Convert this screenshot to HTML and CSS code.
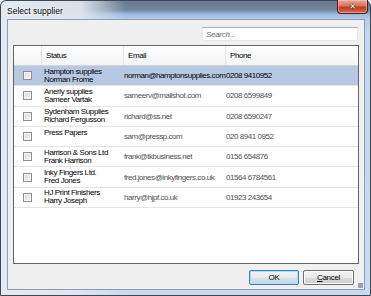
FILE: index.html
```html
<!DOCTYPE html>
<html lang="en">
<head>
  <meta charset="UTF-8" />
  <title>Select supplier</title>
  <link rel="stylesheet" href="styles.css">
</head>
<body>
  <div class="window">
    <div class="titlebar">
      <span class="title">Select supplier</span>
      <div class="close">&#x2715;</div>
    </div>

    <div class="client">
      <div class="search-row">
        <input class="search" type="text" placeholder="Search...">
      </div>

      <div class="grid">
        <div class="row head">
          <div class="cell"></div>
          <div class="cell">Status</div>
          <div class="cell">Email</div>
          <div class="cell">Phone</div>
        </div>

        <div class="row selected">
          <div class="cell check"><span class="box"></span></div>
          <div class="cell name">Hampton supplies<br>Norman Frome</div>
          <div class="cell info">norman@hamptonsupplies.com</div>
          <div class="cell info">0208 9410952</div>
        </div>
        <div class="row">
          <div class="cell check"><span class="box"></span></div>
          <div class="cell name">Anerly supplies<br>Sameer Vartak</div>
          <div class="cell info">sameerv@mailshot.com</div>
          <div class="cell info">0208 6599849</div>
        </div>
        <div class="row">
          <div class="cell check"><span class="box"></span></div>
          <div class="cell name">Sydenham Supplies<br>Richard Fergusson</div>
          <div class="cell info">richard@ss.net</div>
          <div class="cell info">0208 6590247</div>
        </div>
        <div class="row">
          <div class="cell check"><span class="box"></span></div>
          <div class="cell name">Press Papers<br>&nbsp;</div>
          <div class="cell info">sam@pressp.com</div>
          <div class="cell info">020 8941 0952</div>
        </div>
        <div class="row">
          <div class="cell check"><span class="box"></span></div>
          <div class="cell name">Harrison &amp; Sons Ltd<br>Frank Harrison</div>
          <div class="cell info">frank@tkbusiness.net</div>
          <div class="cell info">0156 654876</div>
        </div>
        <div class="row">
          <div class="cell check"><span class="box"></span></div>
          <div class="cell name">Inky Fingers Ltd.<br>Fred Jones</div>
          <div class="cell info">fred.jones@inkyfingers.co.uk</div>
          <div class="cell info">01564 6784561</div>
        </div>
        <div class="row">
          <div class="cell check"><span class="box"></span></div>
          <div class="cell name">HJ Print Finishers<br>Harry Joseph</div>
          <div class="cell info">harry@hjpf.co.uk</div>
          <div class="cell info">01923 243654</div>
        </div>
      </div>

      <div class="buttons">
        <button class="btn default">OK</button>
        <button class="btn"><u>C</u>ancel</button>
        <div class="grip"></div>
      </div>
    </div>
  </div>
</body>
</html>
```

FILE: styles.css
```css
body {
  margin: 0;
  font-family: "Liberation Sans", Arial, sans-serif;
  font-size: 8px;
  letter-spacing: -0.4px;
  background: #ffffff;
}

.window {
  width: 371px;
  height: 296px;
  box-sizing: border-box;
  border: 1px solid #3d4855;
  border-radius: 6px 6px 0 0;
  padding: 0 5px 5px 6px;
  display: flex;
  flex-direction: column;
  background:
    linear-gradient(to right, rgba(228,234,241,1) 0, rgba(222,230,239,0.95) 80px, rgba(214,224,236,0) 125px),
    linear-gradient(#687a8f 0, #74869a 9px, #9ab8dd 13px, #b4cceb 18px, #c2d6ee 30px, #c9dbf0 100%);
}

.titlebar {
  height: 18px;
  display: flex;
  align-items: flex-start;
}

.title {
  font-size: 8.5px;
  letter-spacing: 0;
  color: #000;
  padding-top: 5px;
  text-shadow: 0 0 3px #fff, 0 0 2px #fff;
}

.close {
  margin-left: auto;
  margin-top: -1px;
  margin-right: -3px;
  width: 31px;
  height: 14px;
  box-sizing: border-box;
  border: 1px solid #4e1a12;
  border-top: none;
  border-radius: 0 0 4px 4px;
  background: linear-gradient(#e9a895 0, #d8755f 45%, #c23a20 55%, #d26a52 100%);
  box-shadow: inset 0 0 0 1px rgba(255,210,200,0.5);
  color: #fff;
  font-family: "DejaVu Sans", sans-serif;
  font-size: 8px;
  font-weight: bold;
  letter-spacing: 0;
  line-height: 13px;
  text-align: center;
  text-shadow: 0 0 2px #3a0c05, 0 0 1px #3a0c05;
}

.client {
  flex: 1;
  background: #f0f0f0;
  border: 1px solid #8a9db5;
  padding: 7px 5px 4px 5px;
  display: flex;
  flex-direction: column;
}

.search-row {
  display: flex;
  justify-content: flex-end;
}

.search {
  width: 156px;
  height: 14px;
  box-sizing: border-box;
  margin: 0 1px 0 0;
  padding: 0 3px;
  border: 1px solid #e3e9ef;
  border-top-color: #abadb3;
  background: #fff;
  font-family: inherit;
  font-size: 8px;
  letter-spacing: -0.3px;
  outline: none;
}

.search::placeholder {
  color: #6d6d6d;
  font-style: italic;
}

.grid {
  flex: 1;
  margin-top: 4px;
  background: #fff;
  border: 1px solid #646464;
}

.row {
  display: grid;
  grid-template-columns: 27px 82px 102px 1fr;
  height: 20.3px;
  box-sizing: border-box;
  border-bottom: 1px solid #e4e4e4;
  color: #505050;
}

.row.head {
  height: 20px;
  color: #000;
  background: linear-gradient(#ffffff, #f3f4f6);
  border-bottom: 1px solid #d5d5d5;
}

.row.head .cell + .cell {
  border-left: 1px solid #e3e4e6;
  padding-left: 4px;
}

.row.selected {
  background: #b7c9e2;
  color: #000;
}

.cell {
  display: flex;
  align-items: center;
  white-space: nowrap;
}

.cell.check {
  justify-content: center;
}

.cell.name {
  color: #000;
  line-height: 8px;
  padding-left: 3px;
}

.cell.info {
  padding-left: 1px;
  letter-spacing: -0.45px;
}

.box {
  width: 9px;
  height: 9px;
  box-sizing: border-box;
  border: 1px solid #8e8f8f;
  background: linear-gradient(135deg, #d4d7dc, #f7f7f7);
  box-shadow: inset 0 0 0 1px #f4f4f4;
}

.buttons {
  margin-top: 6px;
  display: flex;
  justify-content: flex-end;
  gap: 4px;
}

.btn {
  width: 50px;
  height: 15px;
  box-sizing: border-box;
  padding: 0;
  border: 1px solid #707070;
  border-radius: 2px;
  background: linear-gradient(#f2f2f2 0, #ebebeb 50%, #dddddd 50%, #cfcfcf 100%);
  box-shadow: inset 0 0 0 1px #fbfbfb;
  font-family: inherit;
  font-size: 8px;
  letter-spacing: -0.3px;
  color: #000;
}

.btn.default {
  border-color: #3c7fb1;
  background: linear-gradient(#f2f5f8 0, #e6ebf0 50%, #d8e1e9 50%, #cdd7e0 100%);
  box-shadow: inset 0 0 0 1px #a9dcf6;
}

.btn + .btn {
  width: 51px;
}

.grip {
  width: 5px;
  height: 5px;
  align-self: flex-end;
  margin: 0 -4px -3px 0;
  background: radial-gradient(circle, #9aa3ad 0.8px, transparent 1px) 0 0 / 2px 2px;
}
```
